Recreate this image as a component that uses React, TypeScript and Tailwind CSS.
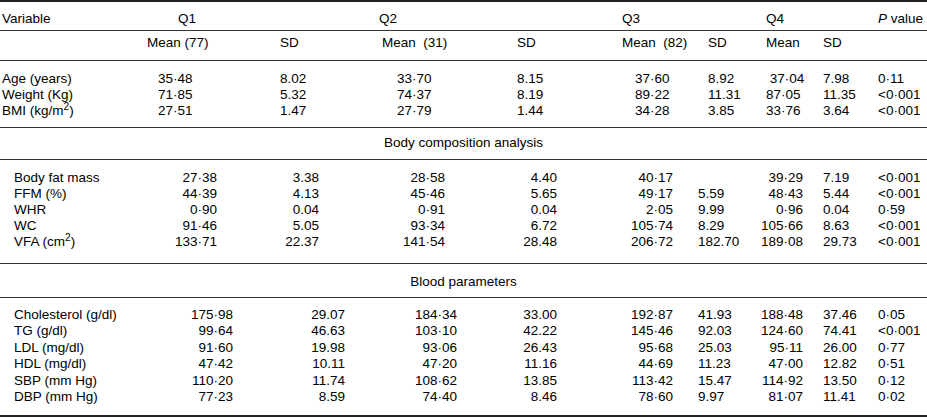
import React from 'react';

type Cell = string | React.ReactNode;

// column templates, px widths taken from the printed table
const HEAD1 = 'grid-cols-[178px_201px_243px_144px_112px_49px]';
const HEAD2 = 'grid-cols-[147px_133px_102px_135px_105px_86px_58px_57px_104px]';
const SEC1 = 'grid-cols-[158px_122px_117px_120px_118px_73px_58px_57px_55px_49px]';
const SEC2 = 'grid-cols-[150px_67px_102px_126px_112px_116px_72px_58px_75px_49px]';
const SEC3 = 'grid-cols-[160px_73px_112px_112px_100px_116px_72px_58px_75px_49px]';

const Rule = () => <div className="h-px bg-[#333]" />;

const sec1: Cell[][] = [
  ['Age (years)', '35·48', '8.02', '33·70', '8.15', '37·60', '8.92', '\u00a037·04', '7.98', '0·11'],
  ['Weight (Kg)', '71·85', '5.32', '74·37', '8.19', '89·22', '11.31', '87·05', '11.35', '<0·001'],
  [<>BMI (kg/m<sup>2</sup>)</>, '27·51', '1.47', '27·79', '1.44', '34·28', '3.85', '33·76', '3.64', '<0·001'],
];

const sec2: Cell[][] = [
  ['Body fat mass', '27·38', '3.38', '28·58', '4.40', '40·17', '', '39·29', '7.19', '<0·001'],
  ['FFM (%)', '44·39', '4.13', '45·46', '5.65', '49·17', '5.59', '48·43', '5.44', '<0·001'],
  ['WHR', '0·90', '0.04', '0·91', '0.04', '2·05', '9.99', '0·96', '0.04', '0·59'],
  ['WC', '91·46', '5.05', '93·34', '6.72', '105·74', '8.29', '105·66', '8.63', '<0·001'],
  [<>VFA (cm<sup>2</sup>)</>, '133·71', '22.37', '141·54', '28.48', '206·72', '182.70', '189·08', '29.73', '<0·001'],
];

const sec3: Cell[][] = [
  ['Cholesterol (g/dl)', '175·98', '29.07', '184·34', '33.00', '192·87', '41.93', '188·48', '37.46', '0·05'],
  ['TG (g/dl)', '99·64', '46.63', '103·10', '42.22', '145·46', '92.03', '124·60', '74.41', '<0·001'],
  ['LDL (mg/dl)', '91·60', '19.98', '93·06', '26.43', '95·68', '25.03', '95·11', '26.00', '0·77'],
  ['HDL (mg/dl)', '47·42', '10.11', '47·20', '11.16', '44·69', '11.23', '47·00', '12.82', '0·51'],
  ['SBP (mm Hg)', '110·20', '11.74', '108·62', '13.85', '113·42', '15.47', '114·92', '13.50', '0·12'],
  ['DBP (mm Hg)', '77·23', '8.59', '74·40', '8.46', '78·60', '9.97', '81·07', '11.41', '0·02'],
];

// alignment for the indented sections: means and first SDs right, later SDs/P left
const rightAligned = [
  'pl-[14px] text-left',
  'text-right',
  'text-right',
  'text-right',
  'text-right',
  'text-right',
  'pl-[25px] text-left',
  'text-right',
  'pl-[20px] text-left',
  'text-left',
];

export default function App() {
  return (
    <div className="w-[927px] h-[418px] bg-white text-black font-['Liberation_Sans',Arial,sans-serif] text-[13.5px] leading-4">
      <div className="h-[2px] bg-[#222]" />

      {/* column heads */}
      <div className={`grid ${HEAD1} h-[28px] pt-[9px] whitespace-nowrap`}>
        <div className="pl-[2px]">Variable</div>
        <div>Q1</div>
        <div>Q2</div>
        <div>Q3</div>
        <div>Q4</div>
        <div>
          <i>P</i> value
        </div>
      </div>
      <Rule />
      <div className={`grid ${HEAD2} h-[29px] pt-[4px] whitespace-pre`}>
        <div />
        <div>Mean (77)</div>
        <div>SD</div>
        <div>Mean  (31)</div>
        <div>SD</div>
        <div>Mean  (82)</div>
        <div>SD</div>
        <div>Mean</div>
        <div>SD</div>
      </div>
      <Rule />

      {/* anthropometry */}
      <div className="h-[66px] pt-[10px]">
        {sec1.map((row, i) => (
          <div key={i} className={`grid ${SEC1} whitespace-nowrap`}>
            {row.map((c, j) => (
              <div key={j} className={j === 0 ? 'pl-[2px]' : ''}>
                {c}
              </div>
            ))}
          </div>
        ))}
      </div>
      <Rule />

      <div className="h-[31px] pt-[7px] text-center">Body composition analysis</div>
      <Rule />

      <div className="h-[103px] pt-[10px]">
        {sec2.map((row, i) => (
          <div key={i} className={`grid ${SEC2} whitespace-nowrap`}>
            {row.map((c, j) => (
              <div key={j} className={rightAligned[j]}>
                {c}
              </div>
            ))}
          </div>
        ))}
      </div>
      <Rule />

      <div className="h-[33px] pt-[10px] text-center">Blood parameters</div>
      <Rule />

      <div className="h-[117px] pt-[9px]">
        {sec3.map((row, i) => (
          <div key={i} className={`grid ${SEC3} whitespace-nowrap leading-[16.4px]`}>
            {row.map((c, j) => (
              <div key={j} className={rightAligned[j]}>
                {c}
              </div>
            ))}
          </div>
        ))}
      </div>
      <div className="h-[2px] bg-[#222]" />
    </div>
  );
}
